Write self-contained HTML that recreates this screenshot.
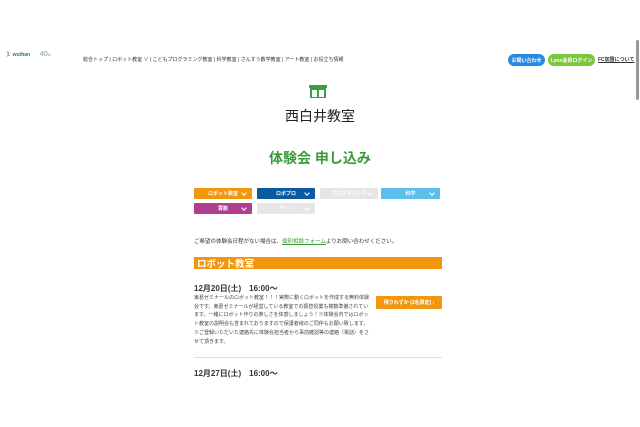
<!DOCTYPE html>
<html><head><meta charset="utf-8"><style>
*{margin:0;padding:0;box-sizing:border-box}
body{width:640px;height:427px;overflow:hidden;background:#fff;font-family:"Liberation Sans","Noto Sans CJK JP",sans-serif;color:#333;position:relative}
.a{position:absolute;white-space:nowrap}
.tab{position:absolute;height:11px;border-radius:1px;color:#fff;font-size:5px;font-weight:bold;display:flex;align-items:center;justify-content:center}
.tab::after{content:"";position:absolute;right:6px;top:3px;width:3px;height:3px;border-right:1px solid #fff;border-bottom:1px solid #fff;transform:rotate(45deg)}
.fl{display:flex;align-items:center;justify-content:center}
</style></head><body>
<div class="a" style="left:5px;top:52px;font-size:5px;color:#2a7a7a;font-weight:bold">🏃 wuthan</div>
<div class="a" style="left:40px;top:51px;font-size:7px;color:#7aaa7a">40<span style="font-size:4px">th</span></div>
<div class="a" style="left:83px;top:56px;font-size:5px;color:#333">総合トップ | ロボット教室 ∨ | こどもプログラミング教室 | 科学教室 | さんすう数学教室 | アート教室 | お役立ち情報</div>
<div class="a fl" style="left:508px;top:54px;width:37px;height:12px;border-radius:6px;background:#2a8ae0;color:#fff;font-size:5px;font-weight:bold">お問い合わせ</div>
<div class="a fl" style="left:548px;top:54px;width:47px;height:12px;border-radius:6px;background:#7cc63c;color:#fff;font-size:5px;font-weight:bold">Lyno会員ログイン</div>
<div class="a" style="left:598px;top:56px;font-size:5px;font-weight:bold;text-decoration:underline">FC加盟について</div>
<div class="a" style="left:636px;top:40px;width:3px;height:60px;background:#999;border-radius:2px"></div>
<svg class="a" style="left:309px;top:85px" width="18" height="13"><rect x="0" y="0" width="18" height="3" fill="#3aa048"/><rect x="2" y="4" width="14" height="9" fill="none" stroke="#3aa048" stroke-width="2"/><rect x="8" y="4" width="2" height="9" fill="#3aa048"/></svg>
<div class="a" style="left:0;width:640px;top:106px;text-align:center;font-size:14px;color:#222">西白井教室</div>
<div class="a" style="left:0;width:640px;top:148px;text-align:center;font-size:14px;font-weight:bold;color:#3a9a3a">体験会 申し込み</div>
<div class="tab" style="left:194px;top:188px;width:58px;background:#f0960f">ロボット教室</div>
<div class="tab" style="left:257px;top:188px;width:58px;background:#0a5aa0">ロボプロ</div>
<div class="tab" style="left:320px;top:188px;width:58px;background:#e6e6e6">プログラミング</div>
<div class="tab" style="left:381px;top:188px;width:59px;background:#5bbfea">科学</div>
<div class="tab" style="left:194px;top:203px;width:58px;background:#b0408f">算数</div>
<div class="tab" style="left:257px;top:203px;width:58px;background:#e6e6e6">アート</div>
<div class="a" style="left:194px;top:237px;font-size:5.5px">ご希望の体験会日程がない場合は、<span style="color:#3a9a3a;text-decoration:underline">個別相談フォーム</span>よりお問い合わせください。</div>
<div class="a" style="left:194px;top:257px;width:248px;height:12px;background:#f0960f;color:#fff;font-weight:bold;font-size:9.5px;display:flex;align-items:center;padding-left:3px">ロボット教室</div>
<div class="a" style="left:194px;top:283px;font-size:8px;font-weight:bold">12月20日(土)　16:00〜</div>
<div class="a" style="left:194px;top:294px;width:178px;white-space:normal;font-size:5px;line-height:8.7px;color:#444">東葛ゼミナールのロボット教室！！！実際に動くロボットを作成する無料体験会です。東葛ゼミナールが経営している教室での振替授業も複数準備されています。一緒にロボット作りの楽しさを体感しましょう！※体験会内ではロボット教室の説明会も含まれておりますので保護者様のご同伴もお願い致します。※ご登録いただいた連絡先に体験会担当者から事前確認等の連絡（電話）をさせて頂きます。</div>
<div class="a fl" style="left:376px;top:296px;width:66px;height:13px;background:#f0960f;color:#fff;font-size:5px;font-weight:bold;border-radius:1px">残りわずか (2名限定) ›</div>
<div class="a" style="left:194px;top:357px;width:248px;height:1px;background:#ddd"></div>
<div class="a" style="left:194px;top:368px;font-size:8px;font-weight:bold">12月27日(土)　16:00〜</div>
</body></html>
